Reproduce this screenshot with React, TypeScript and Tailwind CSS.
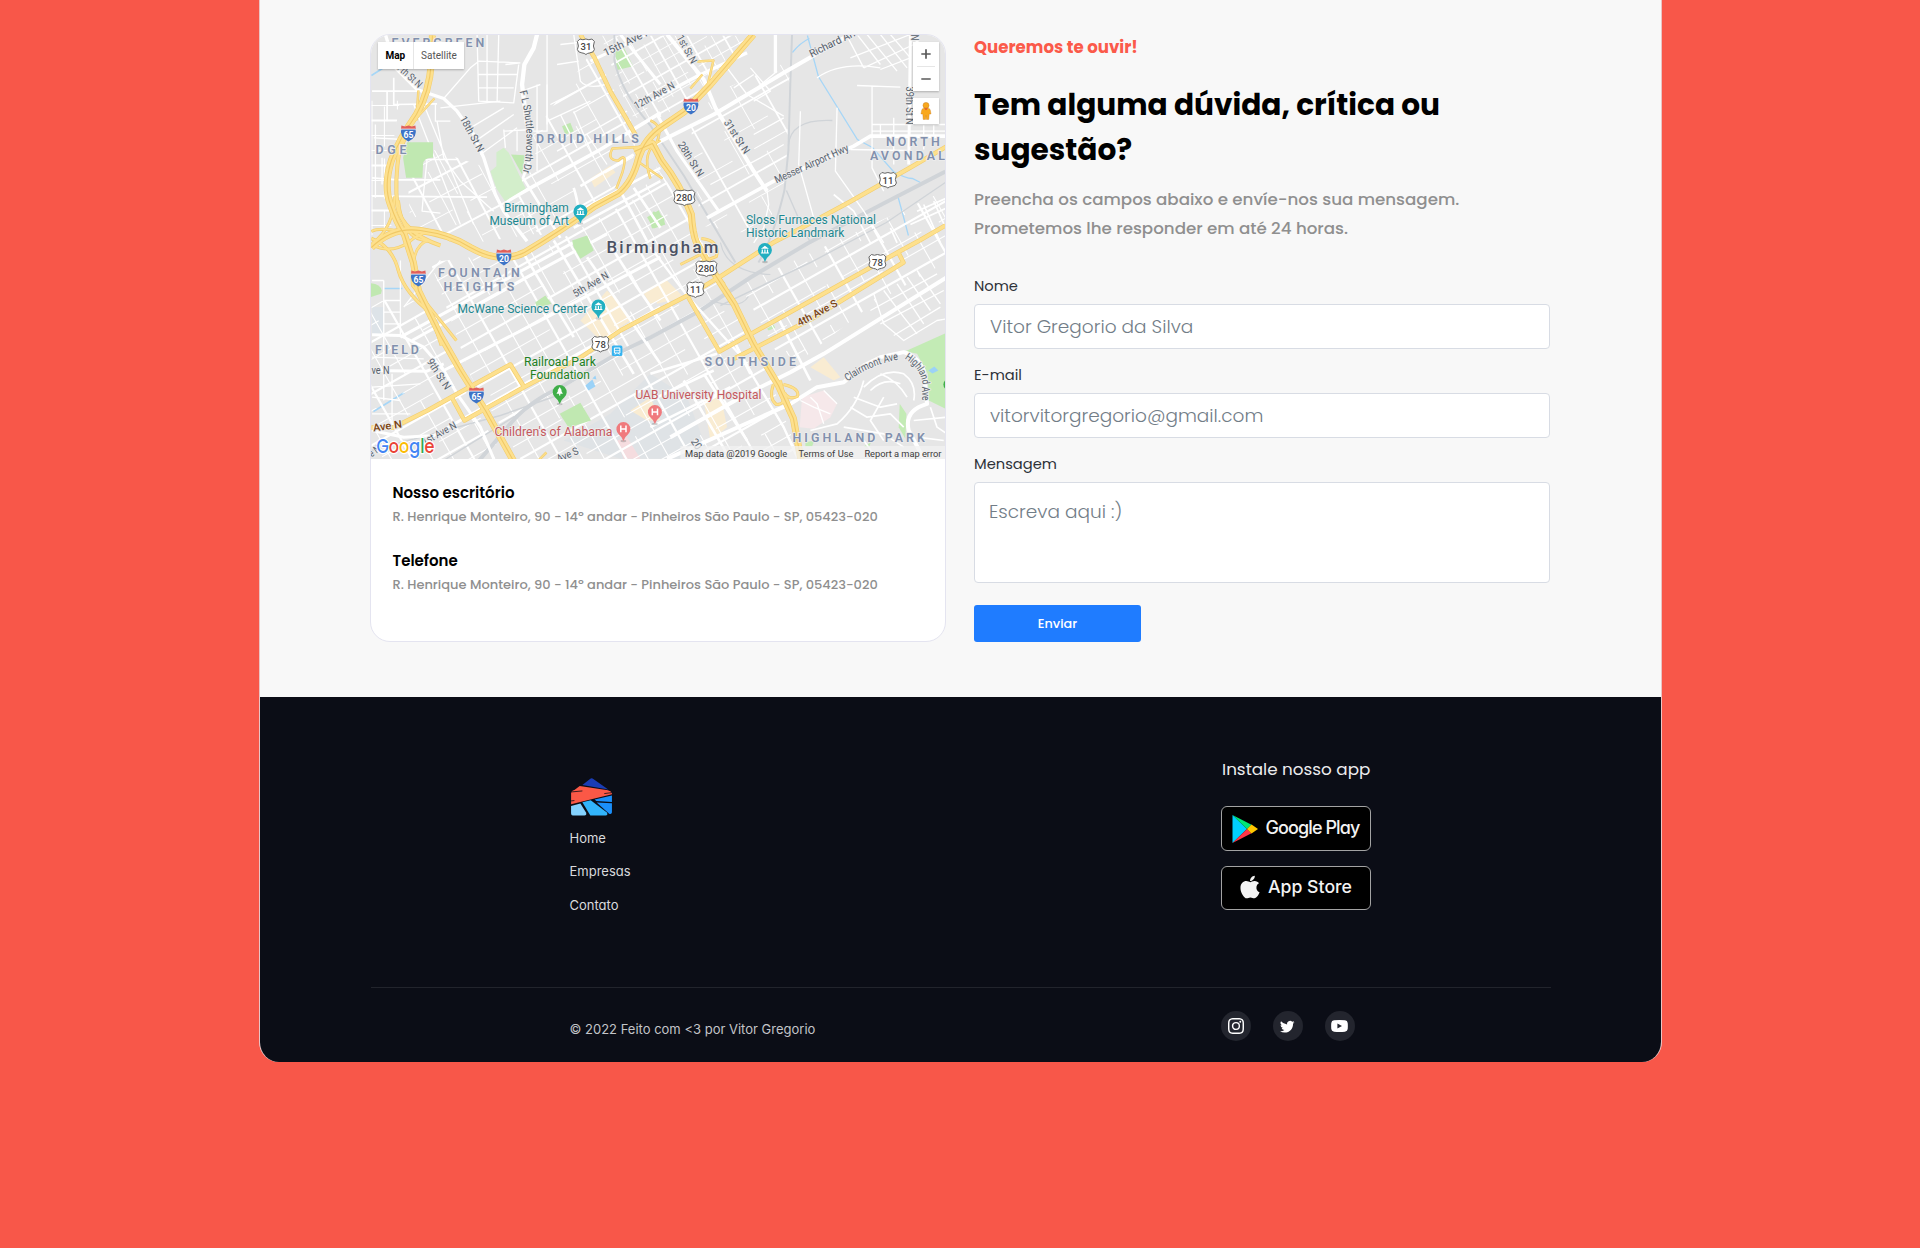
import type { ReactNode } from "react";
import { FaApple } from "react-icons/fa";
import { BsInstagram, BsTwitter } from "react-icons/bs";

const poppins = "font-['Poppins','Inter',sans-serif]";
const inter = "font-['Inter',sans-serif] [font-feature-settings:'cv11']";

type Pt = [number, number];

/* ---------- Map ---------- */

function Grid({ id, clip, angle, cx, cy, du, dv, w = 1.1, dash }: { id: string; clip: string; angle: number; cx: number; cy: number; du: number; dv: number; w?: number; dash?: string }) {
  const lines: ReactNode[] = [];
  const reach = 360;
  let k = 0;
  for (let u = -reach; u <= reach; u += du) {
    lines.push(<line key={"u" + u} x1={u} y1={-reach} x2={u} y2={reach} strokeWidth={k % 3 === 0 ? w * 2 : w} strokeDasharray={k % 3 === 0 ? undefined : dash} strokeDashoffset={k * 37} />);
    k++;
  }
  for (let v = -reach; v <= reach; v += dv) {
    lines.push(<line key={"v" + v} x1={-reach} y1={v} x2={reach} y2={v} strokeWidth={k % 3 === 0 ? w * 2 : w} strokeDasharray={k % 3 === 0 ? undefined : dash} strokeDashoffset={k * 53} />);
    k++;
  }
  return (
    <g clipPath={`url(#${id})`}>
      <clipPath id={id}>
        <polygon points={clip} />
      </clipPath>
      <g transform={`translate(${cx} ${cy}) rotate(${angle})`} stroke="#fff" fill="none">
        {lines}
      </g>
    </g>
  );
}

/* Quarters of the map are drawn at triple scale from their own corner. */
const NW = "translate(360 24) scale(.33333)";
const NE = "translate(650 24) scale(.33333)";
const SW = "translate(360 240) scale(.33333)";
const SE = "translate(650 240) scale(.33333)";

const whiteRoads: [string, string, number][] = [
  [NW, "M75 30L105 130L170 195L250 222L290 260L340 330L370 400L405 510L430 560L500 650", 10],
  [NW, "M530 30L520 70L492 120L485 180L492 240L500 300", 13],
  [NW, "M500 300L510 400L488 460L600 640", 8],
  [NW, "M440 530L520 485L620 430L720 375L900 265", 11],
  [NW, "M690 110L900 10M780 30L900 180", 9],
  [NW, "M35 460L110 466L240 466M35 515L380 518M35 200L170 200M80 200L80 290M100 160L100 240L230 238", 5],
  [NW, "M225 240L225 290L270 290M250 222L330 130L355 110L480 115M350 30L355 230L460 235L475 120M380 30L380 230M415 30L410 235M435 120L480 115M355 150L470 150M355 190L460 190", 4],
  [NW, "M240 250L420 230M330 310L430 250M345 350L460 270M360 390L470 310M430 320L520 315M430 315L435 370M470 315L470 380M500 320L560 320L560 180M530 180L530 440M485 200L540 180", 4],
  [NW, "M160 240L300 600M190 240L340 600M230 290L250 400L300 470L400 560M40 340L130 345M45 300L45 520M65 400L65 480M190 405L290 405M200 405L190 500L185 560L240 566", 4],
  [NW, "M640 30L660 170Q680 195 735 180M560 30L560 300M600 60L690 50M590 120L655 110M570 240L650 200M560 290L690 230M590 380L800 260M680 330L740 420M640 260L700 400M600 270L650 370", 4],
  [NW, "M900 470L640 610M640 490Q650 520 655 560L900 430M660 485L820 390M780 500L860 650M820 490L900 610", 8],
  [NE, "M50 30L160 165L195 250L250 340L310 440L350 500M0 365L190 270L400 145L590 35", 12],
  [NE, "M0 230L140 155L290 85M375 30L375 145", 10],
  [NE, "M170 580L370 470L610 365L660 335L890 335", 11],
  [NE, "M780 30L775 420M800 30L800 60M20 270L80 380L205 560", 9],
  [NE, "M665 185L665 430L700 500M620 183L750 188M600 375L770 378M665 300L890 300M665 320L890 320M730 280L730 420M690 300L690 335M820 300L820 375M850 280L850 340M450 260L445 420L490 580M560 250L555 440L640 560L700 655", 4],
  [NE, "M500 160Q570 110 690 130M590 35L640 130M620 30L690 120M650 30L740 140M690 30L770 130M720 30L780 100M600 100L780 30M640 130L790 60M690 135L780 100", 4],
  [NE, "M230 130L290 210L400 275M310 330L400 280M250 230L320 190L380 140M180 480L330 400L400 360M350 500L355 540L340 610L310 655M250 190L310 150M310 230L360 200L300 130", 4],
  [NE, "M550 510L610 560L660 655M800 560L890 520M820 540L870 655M850 530L890 620M780 600L890 550M740 655L720 610", 5],
  [SW, "M35 283L120 285L190 320L250 390L290 460L360 560L400 655M35 390L200 392L250 370", 9],
  [SW, "M120 290L650 0M155 300L500 110L740 -20M250 390L560 230L900 50M35 570L130 590L220 585L900 200", 9],
  [SW, "M70 120L70 480M70 180L120 180M70 215L120 215M70 250L120 250M35 350L190 355M35 440L180 430M35 470L120 480M35 520L150 520M70 120L35 120M120 60L120 290M95 400L95 570M130 200L240 60", 4],
  [SW, "M490 40L640 290M580 0L820 400M680 50L900 370M740 0L830 140L900 240", 8],
  [SE, "M0 20L110 165L270 345L400 560L440 650", 7],
  [SE, "M60 590L290 460L420 395L520 340L890 110M50 655L420 490L500 440L580 425L640 375L690 350L760 335Q800 345 820 390L830 490Q760 510 775 570L820 655", 12],
  [SE, "M385 235L480 420M255 310L300 400M0 400L200 340M0 480L190 390M0 560L240 440M100 420L230 640M160 400L290 600", 8],
  [SE, "M640 420Q620 500 560 550L480 570M690 400Q740 420 770 470M640 440Q700 380 760 400Q800 430 790 480M660 450Q700 410 750 430M700 470L660 540L700 600M600 500L650 530L720 520L760 560M580 560L700 580L760 620M640 600L680 655M840 500L860 560L890 580M790 540L890 530M800 590L880 600M610 470L690 500L740 490", 5],
  [SE, "M670 160L700 250L760 300L860 240L890 235M700 150L760 230L800 280M740 130L820 250M770 110L840 210M800 90L870 190M660 210L860 100M690 250L880 150M730 285L870 200", 4],
  [SE, "M480 470L500 490L520 550M450 480L490 500L540 520M560 490L520 450", 4],
];

const highways: [string, number][] = [
  ["M432 35L431 62Q429 92 416 114Q398 140 391 160Q383 185 390 204Q396 222 404 234L413 262L418 290L440 335L460 370L485 410L514 462", 7],
  ["M428 90Q408 124 399 150Q394 180 397 206Q402 232 440 245", 4],
  ["M434 98L412 122L398 155M418 90L416 120", 2.5],
  ["M371 247Q392 226 420 230Q450 234 470 247Q500 264 524 252Q558 232 594 206L618 193Q632 182 638 158Q644 138 662 126L684 111L710 84L753 34", 7],
  ["M371 238Q392 246 398 270Q404 292 430 312L441 345", 3.5],
  ["M371 244Q390 254 408 242Q430 222 450 240M394 196Q394 226 372 243M398 200Q402 240 428 240Q410 244 412 285L440 320L456 340M404 232Q380 226 371 231", 3],
  ["M634 151L652 143L661 160Q680 184 691 214Q692 232 696 242L712 270L734 304L753 343L778 385L793 418Q797 440 801 462", 7],
  ["M646 146L612 148Q606 160 618 160Q628 150 622 172L616 188M660 140Q640 150 650 178M636 160L662 178M650 120Q664 126 656 142", 2.5],
  ["M580 34L594 57L610 91L627 120L636 136", 4.5],
  ["M946 146L910 167L850 201L800 228L773 242L720 276L693 292L650 314L620 330L580 357L523 387L464 420L452 398M371 427L393 427L427 410L470 386L510 364L524 387", 4.5],
  ["M688 297L719 351L897 252L919 240L945 225M732 359L812 318L903 262L898 252", 4.5],
  ["M773 384Q768 398 776 404Q786 404 783 392L780 380M783 384Q800 388 797 396Q788 400 784 392", 3],
  ["M701 238Q720 240 716 256L700 262M680 264L700 254M718 276L724 284", 3],
  ["M697 61L713 60L706 90M690 88L702 74M536 462L546 452", 2.5],
];

const rails: [string, number][] = [
  ["M614 24L614 60Q620 90 650 125L684 176L735 262", 2],
  ["M792 24L790 80L788 150L784 190Q772 240 758 262", 2],
  ["M786 190L800 222L810 242M788 145Q790 118 832 120", 1.4],
  ["M945 171L883 203L807 243L750 277L700 310L650 337L617 353L560 387Q526 402 507 427L477 462", 4],
  ["M945 182L886 222L810 262L720 305M371 450L500 415L560 394M440 462L540 400", 1.4],
  ["M720 242Q726 272 770 274M710 300Q740 310 748 296", 1.2],
];

function Shield({ x, y, n, interstate }: { x: number; y: number; n: string; interstate?: boolean }) {
  const wide = n.length > 2 ? 2 : 0;
  return (
    <g transform={`translate(${x} ${y})`}>
      {interstate ? (
        <>
          <path d="M-7 -5.5Q0 -3.5 7 -5.5Q9.5 3.5 0 8Q-9.5 3.5 -7 -5.5Z" fill="#3d74c7" />
          <path d="M-7 -8L-3.5 -7L0 -8L3.5 -7L7 -8L7.4 -4.6L-7.4 -4.6Z" fill="#e0605c" />
          <rect x="-7.4" y="-4.8" width="14.8" height=".8" fill="#fff" />
        </>
      ) : (
        <path d={`M${-6 - wide} -7.5Q-3 -6 0 -7.5Q3 -6 ${6 + wide} -7.5L${8.5 + wide} -5Q${6.5 + wide} 0 ${8.5 + wide} 3Q${8 + wide} 6 ${4 + wide} 6.4Q1.5 6.6 0 8Q-1.5 6.6 ${-4 - wide} 6.4Q${-8 - wide} 6 ${-8.5 - wide} 3Q${-6.5 - wide} 0 ${-8.5 - wide} -5Z`} fill="#fff" stroke="#666" strokeWidth="1" />
      )}
      <text x="0" y={interstate ? 4 : 3.6} textAnchor="middle" fontSize={interstate ? 8.6 : 9.5} fontWeight={interstate ? 700 : 500} fill={interstate ? "#fff" : "#444"}>
        {n}
      </text>
    </g>
  );
}

function Pin({ x, y, color, kind }: { x: number; y: number; color: string; kind: "museum" | "tree" | "hospital" }) {
  return (
    <g transform={`translate(${x} ${y})`}>
      <ellipse cx="0" cy="12" rx="3" ry="1.2" fill="#000" opacity=".18" />
      <path d="M0 12Q-1 8 -4.5 5.4A7 7 0 1 1 4.5 5.4Q1 8 0 12Z" fill={color} />
      {kind === "museum" && <path d="M-4 -1.2L0 -4.2L4 -1.2ZM-3.2 -.6H-2V2.4H-3.2ZM-.6 -.6H.6V2.4H-.6ZM2 -.6H3.2V2.4H2ZM-4 2.6H4V3.6H-4Z" fill="#fff" />}
      {kind === "tree" && <path d="M0 -5L2.2 -1.5H1.4L3.2 1.8H.6V3.6H-.6V1.8H-3.2L-1.4 -1.5H-2.2Z" fill="#fff" />}
      {kind === "hospital" && <path d="M-2.6 -3.4V3.2M2.6 -3.4V3.2M-2.6 0H2.6" stroke="#fff" strokeWidth="1.5" fill="none" />}
    </g>
  );
}

const districts: [string, number, number, number][] = [
  ["EVERGREEN", 391, 46.7, 93],
  ["DGE", 375, 153, 31],
  ["DRUID HILLS", 535.5, 142, 103],
  ["NORTH", 885.5, 145, 54],
  ["AVONDAL", 869.5, 159.8, 75],
  ["FOUNTAIN", 437.5, 276, 82],
  ["HEIGHTS", 443, 290.8, 71],
  ["FIELD", 374.5, 353, 44],
  ["SOUTHSIDE", 704, 365.2, 91.5],
  ["HIGHLAND PARK", 792, 441.2, 132.5],
];

const places: [string, number, number, number, string][] = [
  ["Birmingham", 503.5, 211, 65, "#1d8790"],
  ["Museum of Art", 489, 224.6, 79.5, "#1d8790"],
  ["Sloss Furnaces National", 745.5, 223, 130, "#1d8790"],
  ["Historic Landmark", 745.5, 236.6, 98.5, "#1d8790"],
  ["McWane Science Center", 457, 312.4, 130, "#1d8790"],
  ["Railroad Park", 523.5, 365, 72, "#22801f"],
  ["Foundation", 529.5, 378.7, 60, "#22801f"],
  ["UAB University Hospital", 635, 398.4, 126, "#c4585d"],
  ["Children's of Alabama", 494, 435.4, 118, "#c4585d"],
];

const streetNames: [string, Pt, Pt, string?][] = [
  ["18th St N", [459, 118], [478, 152]],
  ["7th St N", [396, 68], [418, 88]],
  ["15th Ave N", [605, 56], [652, 33]],
  ["12th Ave N", [636, 109], [675, 87]],
  ["1st St N", [676, 37], [691, 64]],
  ["28th St N", [677, 144], [698, 177]],
  ["31st St N", [723, 122], [744, 154]],
  ["Richard Arrington", [811, 57], [882, 22]],
  ["39th St N", [906, 86], [906, 124]],
  ["St N", [911, 24], [911, 40]],
  ["Messer Airport Hwy", [776, 183], [849, 150]],
  ["5th Ave N", [575, 297], [609, 277]],
  ["9th St N", [426, 361], [445, 390]],
  ["ve N", [371, 373], [389, 373]],
  ["Ave N", [373, 431], [402, 427], "#7a4310"],
  ["1st Ave N", [424, 445], [457, 427]],
  ["Ave S", [558, 462], [579, 453]],
  ["4th Ave S", [799, 326], [838, 305], "#7a4310"],
  ["e N", [371, 457], [381, 450]],
  ["20", [690, 441], [696, 450]],
];

function CityMap() {
  return (
    <svg viewBox="370.6 34.5 574 424" className="block h-full w-full font-['Roboto',sans-serif]" preserveAspectRatio="none">
      <rect x="370" y="34" width="576" height="426" fill="#e6e6e6" />

      {/* hospital, campus and commercial areas */}
      <g transform={SE}>
        <path d="M455 470L520 450L560 490L540 530L490 565L448 560Z" fill="#f6e8ea" />
        <path d="M0 400L110 470L180 655L-90 655L-260 600L-120 520Z" fill="#dfe3e6" />
        <path d="M480 380L520 350L570 410L550 420ZM160 480L210 460L230 560L180 600ZM0 140L50 120L100 170L20 190Z" fill="#f9ecd2" />
      </g>
      <g transform={SW}>
        <path d="M660 240L740 150L770 180L810 240L720 300ZM850 160L900 130L900 180L870 190ZM810 510L870 470L900 540L860 540Z" fill="#f9ecd2" />
        <path d="M770 600L800 590L840 655L790 655Z" fill="#f5dcdf" />
        <path d="M35 200L70 200L70 280L35 280Z" fill="#dde3e8" />
      </g>
      <path d="M590 178L610 165L615 172L594 187Z" fill="#f9ecd2" />

      {/* parks */}
      <g transform={NW} fill="#c0e8b1">
        <path d="M452 390L494 392L485 450Z" />
        <path d="M765 80L790 68L818 125L768 137Z" />
        <path d="M605 305L630 295L640 320L615 330Z" />
        <path d="M860 578L895 557L915 600L880 612Z" />
      </g>
      <g transform={NE} fill="#c0e8b1">
        <path d="M-5 580L10 560L42 578L42 600L5 612Z" />
      </g>
      <g transform={SE} fill="#c3ebb5">
        <path d="M765 332L886 278L892 276L892 508L835 480L832 400L800 340Z" />
        <path d="M748 490L768 520L765 595L745 560Z" />
        <path d="M350 265L370 253L374 262L355 270ZM465 605L492 600L485 618L465 618ZM640 618L662 605L655 622Z" />
      </g>

      {/* water */}
      <g fill="none" stroke="#a6d6f7" strokeWidth="1.3">
        <path d="M807 35L818 76L857 139L872 147L893 171Q905 178 912 178L920 182M792 52Q800 42 809 38M897 194L903 216L908 235" />
        <path d="M371 75L382 68M373 411L404 392M384 288H402" strokeWidth="1.6" />
      </g>
      <path d="M928 370L934 366L938 370L932 373Z" fill="#9bd2f7" />

      {/* street grids */}
      <Grid id="g1" clip="430,262 545,247 640,195 655,165 690,215 715,270 735,303 760,352 800,459 520,459 470,375" angle={-29.5} cx={658} cy={247} du={19} dv={14} dash="120 22" />
      <Grid id="g2" clip="500,180 592,50 636,130 632,165 612,190 540,235 505,200" angle={-29.5} cx={600} cy={120} du={21} dv={17} w={1} dash="70 35" />
      <Grid id="g3" clip="600,35 752,35 690,100 650,122 630,115" angle={-29.5} cx={680} cy={60} du={10.5} dv={11} w={0.9} dash="60 12" />
      <Grid id="g4" clip="740,285 945,190 945,262 870,305 800,360 775,350" angle={-29.5} cx={800} cy={300} du={17} dv={15} dash="90 20" />
      <Grid id="g5" clip="371,300 420,300 470,400 505,459 371,459" angle={-29.5} cx={420} cy={400} du={18} dv={15} dash="80 30" />
      <Grid id="g6" clip="690,120 720,90 790,60 785,190 760,235 700,225" angle={-29.5} cx={740} cy={140} du={27} dv={22} w={0.9} dash="50 25" />
      <Grid id="g7" clip="371,100 400,100 388,170 392,230 371,235" angle={0} cx={380} cy={150} du={13} dv={15} dash="40 12" />
      <Grid id="g8" clip="405,140 480,165 500,190 545,232 470,243 410,225" angle={62} cx={470} cy={200} du={18} dv={16} w={1} dash="60 20" />

      <g fill="none" stroke="#d0d4d8">
        {rails.map(([d, w], i) => (
          <path key={i} d={d} strokeWidth={w} />
        ))}
      </g>

      <g fill="none" stroke="#fff" strokeLinejoin="round">
        {whiteRoads.map(([t, d, w], i) => (
          <path key={i} transform={t} d={d} strokeWidth={w} />
        ))}
      </g>

      {/* parks that interrupt the streets */}
      <g transform={NW}>
        <path d="M140 353L218 353L218 400Q190 398 188 420L186 460L137 460L128 400Z" fill="#c0e8b1" />
        <path d="M408 383L430 370L445 385L496 492L434 530L408 492L390 440L408 425Z" fill="#d3eecb" />
      </g>
      <g transform={SW} fill="#c0e8b1">
        <path d="M635 0L680 -15L700 30L660 55L640 20Z" />
        <path d="M525 185L555 165L573 190L530 205Z" />
        <path d="M30 128Q60 130 64 150L62 160L30 170Z" />
        <path d="M598 520L660 487L692 540L625 562Z" />
      </g>
      <path d="M585 385L592 379L595 386L588 390ZM592 378L595 375L596 379Z" fill="#9bd2f7" />

      {/* highways: casing, fill and centre line */}
      <g fill="none" strokeLinejoin="round">
        {highways.map(([d, w], i) => (
          <path key={i} d={d} strokeWidth={w} stroke="#f3cd6c" />
        ))}
        {highways.map(([d, w], i) => (
          <path key={i} d={d} strokeWidth={w - 1.2} stroke="#fde08d" />
        ))}
        {highways.filter(([, w]) => w > 6).map(([d], i) => (
          <path key={i} d={d} strokeWidth="1.1" stroke="#f0c866" />
        ))}
      </g>

      {/* street names */}
      <g fontSize="10.5" stroke="#ececec" strokeWidth="2" paintOrder="stroke" strokeLinejoin="round">
        {streetNames.map(([name, a, b, color], i) => {
          const len = Math.hypot(b[0] - a[0], b[1] - a[1]);
          const ang = (Math.atan2(b[1] - a[1], b[0] - a[0]) * 180) / Math.PI;
          return (
            <text key={i} transform={`translate(${a[0]} ${a[1]}) rotate(${ang})`} textLength={len} lengthAdjust="spacingAndGlyphs" fill={color ?? "#56616c"} fontWeight={color ? 500 : 400}>
              {name}
            </text>
          );
        })}
        <path id="shut" d="M519 91Q527 120 526 140Q526 156 522 174" fill="none" stroke="none" />
        <text fill="#56616c">
          <textPath href="#shut" textLength="82" lengthAdjust="spacingAndGlyphs">F L Shuttlesworth Dr</textPath>
        </text>
        <path id="clair" d="M847 381Q872 363 900 359" fill="none" stroke="none" />
        <text fill="#56616c">
          <textPath href="#clair" textLength="56" lengthAdjust="spacingAndGlyphs">Clairmont Ave</textPath>
        </text>
        <path id="high" d="M904 358Q920 368 922 382L922 402" fill="none" stroke="none" />
        <text fill="#56616c">
          <textPath href="#high" textLength="49" lengthAdjust="spacingAndGlyphs">Highland Ave</textPath>
        </text>
      </g>

      {/* labels */}
      <g stroke="#eeeeee" strokeWidth="1.6" paintOrder="stroke" strokeLinejoin="round">
        {districts.map(([name, x, y, w]) => (
          <text key={name} x={x} y={y} textLength={w} fontSize="12.4" fontWeight="600" fill="#8190ad">
            {name}
          </text>
        ))}
        {places.map(([name, x, y, w, c]) => (
          <text key={name} x={x} y={y} textLength={w} lengthAdjust="spacingAndGlyphs" fontSize="12" fill={c}>
            {name}
          </text>
        ))}
        <text x="606" y="252.8" textLength="112" fontSize="16.8" fontWeight="500" fill="#4b5162">
          Birmingham
        </text>
      </g>

      <Shield x={408} y={133} n="65" interstate />
      <Shield x={418} y={278} n="65" interstate />
      <Shield x={476} y={395} n="65" interstate />
      <Shield x={690.5} y={106} n="20" interstate />
      <Shield x={503.5} y={257} n="20" interstate />
      <Shield x={585.5} y={46} n="31" />
      <Shield x={684} y={197} n="280" />
      <Shield x={887.5} y={179.5} n="11" />
      <Shield x={706} y={268} n="280" />
      <Shield x={695} y={289} n="11" />
      <Shield x={877} y={261.5} n="78" />
      <Shield x={600} y={343.5} n="78" />

      <Pin x={580} y={211} color="#22afc1" kind="museum" />
      <Pin x={764.5} y={249.5} color="#22afc1" kind="museum" />
      <Pin x={598} y={306} color="#22afc1" kind="museum" />
      <Pin x={559.3} y={391.5} color="#3fae49" kind="tree" />
      <Pin x={654.5} y={411.5} color="#f07a7d" kind="hospital" />
      <Pin x={623} y={428.5} color="#f07a7d" kind="hospital" />
      <circle cx="949" cy="384" r="6" fill="#3fae49" />
      <rect x="611.5" y="345" width="10.5" height="10.5" rx="1.5" fill="#36b3f0" />
      <path d="M614 347.5H619.5V352.5H614ZM614.6 354L615.5 352.6M619 354L618 352.6" stroke="#fff" strokeWidth="1" fill="none" />
      <path d="M614 350.2H619.5" stroke="#fff" strokeWidth=".8" />

      {/* attribution */}
      <rect x="680" y="445.5" width="265" height="13.5" fill="#f2f2f2" opacity=".75" />
      <g fontSize="9.3" fill="#3c3c3c">
        <text x="684.7" y="456.3" textLength="102">Map data @2019 Google</text>
        <text x="798" y="456.3" textLength="55">Terms of Use</text>
        <text x="864" y="456.3" textLength="77">Report a map error</text>
      </g>
      <text x="376" y="452" textLength="58" lengthAdjust="spacingAndGlyphs" fontSize="19.5" fontWeight="500" stroke="#fff" strokeWidth="2.4" paintOrder="stroke" strokeLinejoin="round" className="font-['Poppins','Inter',sans-serif]">
        <tspan fill="#4285f4">G</tspan>
        <tspan fill="#ea4335">o</tspan>
        <tspan fill="#fbbc05">o</tspan>
        <tspan fill="#4285f4">g</tspan>
        <tspan fill="#34a853">l</tspan>
        <tspan fill="#ea4335">e</tspan>
      </text>
    </svg>
  );
}

function MapControls() {
  return (
    <div className="absolute inset-x-[6.5px] top-[7px] flex items-start justify-between font-['Roboto',sans-serif]">
      <div className="flex h-[26.5px] items-center bg-white text-[10px] shadow-[0_1px_2px_rgba(0,0,0,0.25)]">
        <span className="w-[35.5px] text-center font-bold text-black">Map</span>
        <span className="flex h-full w-[51px] items-center justify-center border-l border-[#e6e6e6] text-[#565656]">Satellite</span>
      </div>
      <div className="flex flex-col gap-[7px]">
        <div className="flex h-[49px] w-[26px] flex-col items-center bg-white shadow-[0_1px_2px_rgba(0,0,0,0.25)]">
          <svg viewBox="0 0 26 49" className="h-full w-full" fill="none" stroke="#5a5a5a" strokeWidth="1.7">
            <path d="M8.3 12H17.7M13 7.3V16.7M8.3 37H17.7" />
            <path d="M4 24.5H22" stroke="#e6e6e6" strokeWidth="1" />
          </svg>
        </div>
        <div className="flex h-[26px] w-[26px] items-center justify-center bg-white shadow-[0_1px_2px_rgba(0,0,0,0.25)]">
          <svg viewBox="0 0 12 18" className="h-[18px] w-3" fill="#f9a81b">
            <circle cx="6" cy="3.4" r="3" stroke="#c9822a" strokeWidth=".5" />
            <path d="M3.6 6.2H8.4Q10 6.4 10.4 8.5L11 12H9.2L8.8 17.4H6.4L6 13.5L5.6 17.4H3.2L2.8 12H1L1.6 8.5Q2 6.4 3.6 6.2Z" stroke="#c9822a" strokeWidth=".4" />
            <path d="M4 6.3H8L6 8.2Z" fill="#e0562b" />
          </svg>
        </div>
      </div>
    </div>
  );
}

/* ---------- Contact ---------- */

function Info({ title, text }: { title: string; text: string }) {
  return (
    <div>
      <h3 className="text-[15px] leading-5 font-semibold text-black">{title}</h3>
      <p className="mt-1 text-[13px] leading-5 font-medium whitespace-nowrap text-[#8f8f8f]">{text}</p>
    </div>
  );
}

function OfficeCard() {
  return (
    <section className="flex w-[576px] flex-col overflow-hidden rounded-[20px] border border-[#e4e4f0] bg-white">
      <div className="relative h-[424px] w-full">
        <CityMap />
        <MapControls />
      </div>
      <div className="flex flex-col gap-6 pt-6 pl-[21.5px]">
        <Info title="Nosso escritório" text="R. Henrique Monteiro, 90 - 14º andar - Pinheiros São Paulo - SP, 05423-020" />
        <Info title="Telefone" text="R. Henrique Monteiro, 90 - 14º andar - Pinheiros São Paulo - SP, 05423-020" />
      </div>
    </section>
  );
}

const field = "w-full rounded-[4px] border border-[#d8dce4] bg-white font-light text-[18.5px] placeholder:text-[#727d87] outline-none";

function Field({ label, children }: { label: string; children: ReactNode }) {
  return (
    <label className="flex flex-col gap-2">
      <span className="text-[14.7px] leading-5 text-[#2e3238]">{label}</span>
      {children}
    </label>
  );
}

function ContactForm() {
  return (
    <section className="flex w-[576px] flex-col pt-[1.5px]">
      <p className="text-[16.6px] leading-[23px] font-bold text-[#fb5a4a]">Queremos te ouvir!</p>
      <h2 className="mt-[23px] text-[29.6px] leading-[45px] font-bold whitespace-nowrap text-black">
        Tem alguma dúvida, crítica ou
        <br />
        sugestão?
      </h2>
      <p className="mt-[13px] text-[16.7px] leading-[29.7px] font-medium whitespace-nowrap text-[#8f8f8f]">
        Preencha os campos abaixo e envíe-nos sua mensagem.
        <br />
        Prometemos lhe responder em até 24 horas.
      </p>
      <form className="mt-[32.1px] flex flex-col gap-4" onSubmit={(e) => e.preventDefault()}>
        <Field label="Nome">
          <input className={`${field} h-[45px] px-[15px]`} placeholder="Vitor Gregorio da Silva" />
        </Field>
        <Field label="E-mail">
          <input className={`${field} h-[45px] px-[15px]`} placeholder="vitorvitorgregorio@gmail.com" />
        </Field>
        <Field label="Mensagem">
          <textarea className={`${field} block h-[101px] resize-none px-[14px] pt-[14.5px] leading-7`} placeholder="Escreva aqui :)" />
        </Field>
        <button className="mt-[5.5px] h-[37.5px] w-[167px] rounded-[3px] bg-[#1f7cff] pt-px text-[12.8px] font-medium text-white">Enviar</button>
      </form>
    </section>
  );
}

/* ---------- Footer ---------- */

function Logo() {
  return (
    <svg viewBox="64 54 123 113" className="ml-[1.5px] h-[37.5px] w-[41px]">
      <path d="M98 75L121 57Q126 52 131 57L176 89Z" fill="#1a3cb4" />
      <path d="M90 78L175 91Q186 94 187 99L187 103L64 133L64 100Q64 93 74 90Z" fill="#fb5846" />
      <path d="M64 96L98 93M187 98L164 101M64 123L74 122" stroke="#0b0d17" strokeWidth="2.4" />
      <path d="M64 138L92 131L109 158Q112 167 104 167L69 167Q64 167 64 161Z" fill="#84d2ff" />
      <path d="M98 127L123 121L172 158Q176 167 168 167L122 167Z" fill="#32b4fb" />
      <path d="M135 119L187 107L187 126L140 123Z" fill="#1b8ffa" />
      <path d="M141 128L187 130L187 158Q184 166 177 160Z" fill="#1b8ffa" />
    </svg>
  );
}

function PlayIcon() {
  return (
    <svg viewBox="0 0 26 28" className="h-7 w-[26px] shrink-0">
      <path d="M0.5 0L15 14L0.5 28Z" fill="#00cfff" />
      <path d="M0.5 0L19.5 9.8L15 14Z" fill="#00e676" />
      <path d="M0.5 28L15 14L19.5 18.2Z" fill="#ff3647" />
      <path d="M15 14L19.5 9.6L26 14L19.5 18.4Z" fill="#ffc700" />
    </svg>
  );
}

function Badge({ children, className }: { children: ReactNode; className: string }) {
  return <a className={`flex w-[150px] items-center rounded-[6px] border border-[#a3a3a3] bg-black text-[#f3f3f3] ${className}`}>{children}</a>;
}

function Social({ children }: { children: ReactNode }) {
  return <a className="flex size-[30px] items-center justify-center rounded-full bg-[#23252e] text-white">{children}</a>;
}

function Footer() {
  return (
    <footer className="flex h-[365px] flex-col bg-[#0b0d16]">
      <div className="flex h-[290px] justify-between pt-[60px] pr-[290px] pl-[310px]">
        <nav className={`flex flex-col pt-[21px] text-[13px] leading-5 text-[#d9dadd] ${inter}`}>
          <Logo />
          <div className="mt-[12.4px] flex flex-col gap-[13.5px]">
            <a>Home</a>
            <a>Empresas</a>
            <a>Contato</a>
          </div>
        </nav>
        <div className="flex w-[150px] flex-col">
          <p className="pl-[1.5px] text-[16.8px] leading-6 whitespace-nowrap text-[#ececee]">Instale nosso app</p>
          <Badge className="mt-[25px] h-[45px] gap-[8px] pl-[10px]">
            <PlayIcon />
            <span className={`pb-[2px] text-[18px] leading-6 font-medium tracking-[-0.05em] whitespace-nowrap ${inter}`}>Google Play</span>
          </Badge>
          <Badge className="mt-[14.5px] h-[44.5px] gap-[7px] pl-[17.5px]">
            <FaApple className="mb-px h-[26px] w-[22px]" />
            <span className="pb-px font-['Inter',sans-serif] text-[17.7px] leading-6 font-medium whitespace-nowrap">App Store</span>
          </Badge>
        </div>
      </div>
      <div className="mr-[110px] ml-[111px] h-px bg-[#22242c]" />
      <div className="flex items-start justify-between pt-[23px] pr-[306px] pl-[310px]">
        <p className={`mt-2 text-[13px] leading-5 text-[#c3c4c8] ${inter}`}>© 2022 Feito com &lt;3 por Vitor Gregorio</p>
        <div className="flex gap-[22px]">
          <Social>
            <BsInstagram className="size-4" />
          </Social>
          <Social>
            <BsTwitter className="size-[14.5px]" />
          </Social>
          <Social>
            <svg viewBox="0 0 17 12" className="h-3 w-[17px]">
              <path fillRule="evenodd" d="M3 0.3Q8.500 -.3 14 .3Q16.500.6 16.700 3Q17 6 16.700 9Q16.500 11.400 14 11.700Q8.500 12.300 3 11.700Q.5 11.400.3 9Q0 6 .3 3Q.5.6 3 .3ZM6.400 3.500V8.500L11 6Z" fill="#fff" />
            </svg>
          </Social>
        </div>
      </div>
    </footer>
  );
}

export default function App() {
  return (
    <div className={`flex h-[1248px] w-[1920px] justify-center overflow-hidden bg-[#f85749] ${poppins}`}>
      <main className="flex h-[1062px] w-[1403px] flex-col overflow-hidden rounded-b-[20px] border-x border-[#e9c4c4] bg-[#f8f8f8]">
        <div className="flex h-[697px] shrink-0 items-start gap-7 pt-[34px] pl-[110.5px]">
          <div className="flex h-[607.5px] items-stretch">
            <OfficeCard />
          </div>
          <ContactForm />
        </div>
        <Footer />
      </main>
    </div>
  );
}
